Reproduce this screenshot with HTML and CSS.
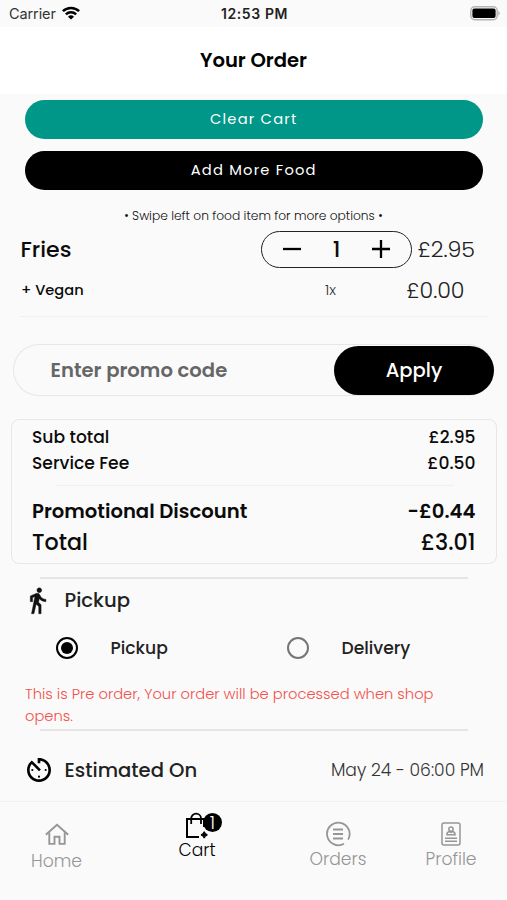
FILE: index.html
```html
<!DOCTYPE html>
<html lang="en">
<head>
<meta charset="utf-8">
<title>Your Order</title>
<link rel="stylesheet" href="styles.css">
</head>
<body>
<div class="app">
  <div class="status">
    <div class="status-left">
      <span class="carrier">Carrier</span>
      <svg class="wifi" width="18" height="14" viewBox="0 0 18 14" fill="none" stroke="#000" stroke-width="2.5">
        <path d="M.9 5.2a11.6 11.6 0 0 1 16.2 0"/>
        <path d="M3.9 8.4a7.3 7.3 0 0 1 10.2 0"/>
        <path d="M9 13.6 6 10.7a4.3 4.3 0 0 1 6 0z" fill="#000" stroke="none"/>
      </svg>
    </div>
    <span class="clock">12:53 PM</span>
    <div class="status-right">
      <svg width="30" height="15" viewBox="0 0 30 15">
        <rect x=".8" y=".8" width="26.4" height="12.9" rx="4" fill="#fafafa" stroke="#b4b4b4" stroke-width="1.5"/>
        <rect x="2.4" y="2.4" width="23.2" height="9.7" rx="2" fill="#000"/>
        <path d="M28.300 5c2 .8 2 3.700 0 4.500z" fill="#b4b4b4"/>
      </svg>
    </div>
  </div>

  <header class="header"><h1>Your Order</h1></header>

  <main class="content">
    <div class="actions">
      <button class="btn btn-clear">Clear Cart</button>
      <button class="btn btn-add">Add More Food</button>
    </div>
    <p class="hint">• Swipe left on food item for more options •</p>

    <div class="item">
      <span class="item-name">Fries</span>
      <div class="stepper">
        <svg width="20" height="20" viewBox="0 0 20 20" stroke="#000" stroke-width="2.300"><path d="M1 10h18"/></svg>
        <span class="qty">1</span>
        <svg width="20" height="20" viewBox="0 0 20 20" stroke="#000" stroke-width="2.300"><path d="M1 10h18M10 1v18"/></svg>
      </div>
      <span class="item-price">£2.95</span>
    </div>
    <div class="extra">
      <span class="extra-name">+ Vegan</span>
      <span class="extra-qty">1x</span>
      <span class="extra-price">£0.00</span>
    </div>
    <hr class="line line-item">

    <div class="promo">
      <span class="promo-input">Enter promo code</span>
      <button class="apply">Apply</button>
    </div>

    <section class="summary">
      <div class="row"><span>Sub total</span><span>£2.95</span></div>
      <div class="row"><span>Service Fee</span><span>£0.50</span></div>
      <hr class="line line-summary">
      <div class="row row-discount"><span>Promotional Discount</span><span>-£0.44</span></div>
      <div class="row row-total"><span>Total</span><span>£3.01</span></div>
    </section>

    <hr class="line line-section">
    <div class="heading">
      <svg width="29" height="29" viewBox="0 0 24 24" fill="#111" stroke="#111" stroke-width=".3"><path d="M13.500 5.500c1.100 0 2-.9 2-2s-.9-2-2-2-2 .9-2 2 .9 2 2 2zM9.800 8.900 7 23h2.100l1.800-8 2.100 2v6h2v-7.500l-2.100-2 .6-3C14.800 12 16.800 13 19 13v-2c-1.900 0-3.500-1-4.300-2.400l-1-1.600c-.4-.6-1-1-1.700-1-.3 0-.5.100-.8.100L6 8.300V13h2V9.600l1.800-.7"/></svg>
      <span class="heading-pickup">Pickup</span>
    </div>
    <div class="choices">
      <div class="choice"><span class="radio on"></span><span>Pickup</span></div>
      <div class="choice"><span class="radio"></span><span>Delivery</span></div>
    </div>
    <p class="notice">This is Pre order, Your order will be processed when shop<br>opens.</p>
    <hr class="line line-section line-last">
    <div class="heading heading-time">
      <svg width="32" height="32" viewBox="0 0 24 24" fill="#000">
        <path d="M11 3v4h2V5.080c3.390.49 6 3.390 6 6.920 0 3.870-3.130 7-7 7s-7-3.130-7-7c0-1.680.59-3.220 1.580-4.420L12 13l1.410-1.410-6.800-6.800v.02C4.420 6.450 3 9.050 3 12c0 4.970 4.020 9 9 9s9-4.030 9-9-4.030-9-9-9z"/>
        <circle cx="12" cy="17" r=".8"/><circle cx="17" cy="12" r=".8"/><circle cx="7" cy="12" r=".8"/>
      </svg>
      <span class="heading-est">Estimated On</span>
      <span class="date">May 24 - 06:00 PM</span>
    </div>
  </main>

  <nav class="tabs">
    <div class="tab tab-home">
      <svg width="24" height="22" viewBox="0 0 24 22" fill="none" stroke="#969696" stroke-width="1.900">
        <path d="M.8 11.800 12 1.700l11.200 10.100"/><path d="M4.300 9.500v11.400h5.200v-7.200h5v7.200h5.200V9.500"/>
      </svg>
      <span>Home</span>
    </div>
    <div class="tab tab-cart">
      <div class="bag">
        <svg width="24" height="27" viewBox="0 0 24 27" fill="none" stroke="#000" stroke-width="2">
          <path d="M14 25H2V7h17v8"/><path d="M6.200 12V6.500a4.900 4.900 0 0 1 9.800 0V12" stroke-width="1.800"/>
          <path d="M19.200 19.600c.5 2.200 1 2.700 3.200 3.200-2.200.5-2.700 1-3.200 3.200-.5-2.200-1-2.700-3.200-3.200 2.200-.5 2.700-1 3.200-3.200z" fill="#000" stroke-width="1.200"/>
        </svg>
        <span class="badge">1</span>
      </div>
      <span>Cart</span>
    </div>
    <div class="tab tab-orders">
      <svg width="26" height="26" viewBox="0 0 26 26" fill="none" stroke="#969696" stroke-width="1.800">
        <path d="M23.100 18.600A11.300 11.300 0 1 0 19 22.700"/><path d="M8 8.500h10M8 13h10M8 17.500h10"/>
      </svg>
      <span>Orders</span>
    </div>
    <div class="tab tab-profile">
      <svg width="20" height="24" viewBox="0 0 20 24" fill="none" stroke="#969696" stroke-width="1.500">
        <rect x="1" y="1" width="18" height="22" rx="2"/><circle cx="10" cy="7.200" r="2.100"/>
        <path d="M5.900 12.800c0-2 1.200-3 2.600-3.300l1.500.9 1.500-.9c1.400.3 2.600 1.300 2.600 3.300zM4 16.300h12M4 19.300h12"/>
      </svg>
      <span>Profile</span>
    </div>
  </nav>
</div>
</body>
</html>
```
FILE: styles.css
```css
* { box-sizing: border-box; }
body {
  margin: 0;
  background: #fafafa;
  color: #0b0b0b;
  font-family: Poppins, Inter, sans-serif;
  font-size: 16px;
}
h1, p { margin: 0; font-weight: inherit; }
button { border: 0; padding: 0; font-family: inherit; color: #fff; }
svg { display: block; flex: none; }
span { white-space: nowrap; }
.app { width: 507px; height: 900px; display: flex; flex-direction: column; overflow: hidden; }

.status { flex: none; height: 27px; display: grid; grid-template-columns: 1fr auto 1fr; align-items: center; padding: 0 7px 0 9px; font-family: Inter, sans-serif; }
.status-left { display: flex; align-items: center; gap: 6px; }
.carrier { font-size: 14.5px; letter-spacing: -.1px; color: #333; }
.wifi { margin-top: -2px; }
.clock { font-size: 14px; font-weight: 600; letter-spacing: .6px; color: #222; }
.status-right { display: flex; justify-content: flex-end; }

.header { flex: none; height: 67px; padding-bottom: 2px; background: #fff; display: flex; justify-content: center; align-items: center; }
.header h1 { font-size: 19.6px; font-weight: 600; color: #000; }

.content { flex: 1; display: flex; flex-direction: column; }
.actions { display: flex; flex-direction: column; gap: 12px; padding: 6px 24.5px 0 25px; }
.btn { height: 39px; border-radius: 20px; font-size: 14.7px; font-weight: 400; letter-spacing: 1.2px; text-align: center; }
.btn-clear { background: #009688; }
.btn-add { background: #000; }
.hint { margin-top: 16px; height: 20px; line-height: 20px; text-align: center; font-size: 12.25px; font-weight: 300; color: #111; }

.item { height: 38px; margin-top: 4px; padding: 0 32px 0 20.5px; display: flex; align-items: center; }
.item-name { flex: 1; font-size: 22px; font-weight: 500; }
.stepper { width: 151px; height: 37px; border: 1.5px solid #222; border-radius: 19px; display: flex; align-items: center; justify-content: space-between; padding: 0 20px; }
.qty { font-size: 22px; font-weight: 500; }
.item-price { width: 63px; text-align: right; font-size: 22.2px; font-weight: 300; color: #222; }
.extra { height: 44px; padding: 0 42.5px 0 21px; display: grid; grid-template-columns: 304px 1fr auto; align-items: center; }
.extra-name { font-size: 14.6px; font-weight: 500; }
.extra-qty { font-size: 14.7px; font-weight: 300; color: #333; }
.extra-price { font-size: 22.2px; font-weight: 300; color: #222; }

.line { border: 0; margin: 0; height: 1px; background: #f0f0f0; }
.line-item { margin: 4px 18px 0 20px; }

.promo { height: 52px; margin: 27px 13px 0; border: 1.5px solid #e7e7e7; border-right: 0; border-radius: 26px; display: flex; align-items: center; justify-content: space-between; padding-left: 36.5px; }
.promo-input { font-size: 19.6px; font-weight: 600; color: #666; }
.apply { width: 160px; height: 49px; border-radius: 25px; background: #000; font-size: 19.5px; font-weight: 500; }

.summary { height: 145px; margin: 23px 10px 0 11px; border: 1.5px solid #e7e7e7; border-radius: 8px; padding: 4px 20.5px 0 20px; }
.row { height: 26px; display: flex; justify-content: space-between; align-items: center; font-size: 17.15px; font-weight: 500; }
.line-summary { margin: 9px 22px 9px 24px; }
.row-discount { height: 32px; font-size: 19.6px; font-weight: 600; }
.row-total { height: 30px; font-size: 22.2px; }

.line-section { height: 2px; background: #e6e6e6; margin: 13px 39px 0 40px; }
.heading { height: 42px; display: flex; align-items: center; color: #222; font-size: 19.6px; font-weight: 500; padding-left: 23px; }
.heading-pickup { margin-left: 12.5px; }
.choices { height: 54px; display: grid; grid-template-columns: 231px 1fr; padding-left: 56px; }
.choice { display: flex; align-items: center; gap: 32.5px; font-size: 17.15px; font-weight: 500; color: #222; }
.radio { width: 22px; height: 22px; border: 2.5px solid #757575; border-radius: 50%; display: flex; align-items: center; justify-content: center; }
.radio.on { border-color: #000; }
.radio.on::after { content: ""; width: 12px; height: 12px; border-radius: 50%; background: #000; }
.notice { margin-top: 8px; height: 46px; padding-left: 25px; font-size: 14.7px; line-height: 22px; font-weight: 300; color: #f0524d; white-space: nowrap; }
.line-last { margin-top: 0; }
.heading-time { height: 70px; padding: 7px 23px 0; }
.heading-est { flex: 1; margin-left: 9.5px; }
.date { font-size: 17.15px; font-weight: 300; color: #333; }

.tabs { flex: none; height: 100px; border-top: 1.5px solid #f1f1f1; display: grid; grid-template-columns: 113px 168px 114px 112px; color: #969696; font-size: 17.15px; font-weight: 300; }
.tab { display: flex; flex-direction: column; align-items: center; line-height: 20px; }
.tab-home { padding-top: 21px; }
.tab-home span { margin-top: 6px; }
.tab-cart { padding-top: 10px; color: #000; }
.tab-cart > span { margin-top: 1px; }
.tab-orders { padding-top: 19px; }
.tab-orders > span { margin-top: 2px; }
.tab-profile { padding-top: 20px; }
.tab-profile > span { margin-top: 3px; }
.bag { position: relative; }
.badge { position: absolute; left: 18px; top: 1px; width: 19px; height: 19px; border-radius: 50%; background: #000; color: #fff; font-size: 18px; line-height: 19px; text-align: center; }
```
